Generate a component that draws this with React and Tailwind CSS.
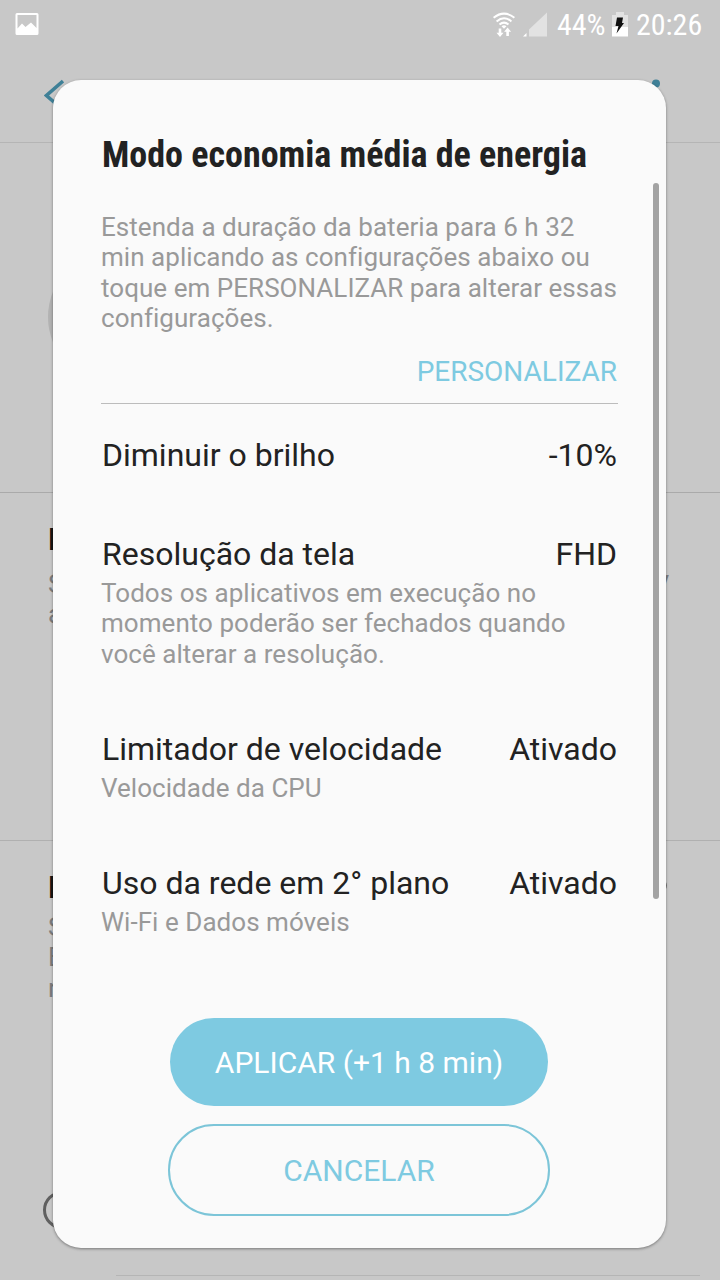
const settings = [
  { label: 'Diminuir o brilho', value: '-10%' },
  {
    label: 'Resolução da tela',
    value: 'FHD',
    lines: ['Todos os aplicativos em execução no', 'momento poderão ser fechados quando', 'você alterar a resolução.'],
  },
  { label: 'Limitador de velocidade', value: 'Ativado', lines: ['Velocidade da CPU'] },
  { label: 'Uso da rede em 2° plano', value: 'Ativado', lines: ['Wi-Fi e Dados móveis'] },
]

function StatusBar() {
  return (
    <div className="flex h-[50px] items-center justify-between pl-[15px] pr-[17px] text-white">
      <svg width="24" height="24" viewBox="0 0 24 24">
        <path
          fill="currentColor"
          fillRule="evenodd"
          d="M2 0h20q1.500 0 1.500 1.500v19q0 1.500-1.500 1.500H2Q.5 22 .5 20.500v-19Q.5 0 2 0zM2.500 2v13.500L7 10.500l3.500 3.500 5.500-4.500 5.500 5.500V2z"
        />
      </svg>

      <div className="flex items-center">
        <svg width="22" height="26" viewBox="0 0 22 26" fill="none" stroke="currentColor" strokeWidth="2">
          <path d="M.6 5.800Q11-2.600 21.400 5.800M3.600 9.400Q11 3 18.400 9.400M6.500 12.500Q11 8.800 15.500 12.500" />
          <path fill="currentColor" stroke="none" d="M8.500 14.200Q11 12.300 13.500 14.200L11 16.800zM5.700 16.500h2.600v4.200h2.200L7 25l-3.500-4.300h2.200zM13.300 24v-4.200h-2.200l3.500-4.300 3.500 4.300h-2.200V24z" />
        </svg>
        <svg className="ml-[8px]" width="25" height="26" viewBox="0 0 25 26">
          <path fill="#e2e2e2" d="M24 .5V24.500H6V17.500z" />
          <path fill="#fff" d="M0 24.500l3.500-3.500v3.500z" />
        </svg>
        <span className="ml-[9px] w-[49px] whitespace-nowrap font-['Roboto_Condensed','Roboto',sans-serif] text-[30px] leading-[50px] [font-stretch:75%]">
          44%
        </span>
        <svg className="ml-[6px]" width="16" height="26" viewBox="0 0 16 26">
          <path fill="#e2e2e2" d="M4 0h8v3h4v21H0V3h4z" />
          <path fill="#fff" d="M0 15h16v9.500H0z" />
          <path fill="#111" d="M5 5.500h6l-1 5.500h2L4.500 21.500 6.500 14H3.500z" />
        </svg>
        <span className="ml-[8px] w-[67px] whitespace-nowrap font-['Roboto_Condensed','Roboto',sans-serif] text-[30px] leading-[50px] [font-stretch:75%]">
          20:26
        </span>
      </div>
    </div>
  )
}

// Dimmed settings screen, only its edges show around the dialog
function SettingsScreen() {
  return (
    <div className="flex h-full flex-col bg-[#c8c8c8]">
      <header className="h-[143px] border-b border-[#b5b5b5]">
        <StatusBar />
        <div className="flex justify-between pl-[44px] pr-[60px] pt-[29px] text-[#3f8097]">
          <svg width="20" height="32" viewBox="0 0 20 32" fill="none" stroke="currentColor" strokeWidth="3.500">
            <path d="M19 2L2.500 16.500 19 31" />
          </svg>
          <svg width="8" height="32" viewBox="0 0 8 32" fill="currentColor">
            <circle cx="4" cy="4.500" r="4" />
            <circle cx="4" cy="16" r="4" />
            <circle cx="4" cy="27.500" r="4" />
          </svg>
        </div>
      </header>

      <section className="h-[350px] border-b border-[#aaa] pl-[48px] pt-[107px]">
        <div className="h-[134px] w-[134px] rounded-full bg-[#b2b2b2]" />
      </section>

      <section className="flex h-[348px] justify-between border-b border-[#b0b0b0] pl-[48px] pr-[51px] pt-[28px]">
        <div className="text-[26px] leading-[30.500px] text-[#7c7c7c]">
          <div className="mb-[10px] text-[32px] font-bold leading-[37.500px] text-[#161616]">E</div>
          <div>S</div>
          <div>a</div>
        </div>
        <div className="pt-[44px] text-[26px] leading-[30.500px] text-[#7c7c7c]">y</div>
      </section>

      <section className="flex h-[434px] flex-col justify-between">
        <div className="flex justify-between pl-[48px] pr-[53px] pt-[28px]">
          <div className="text-[26px] leading-[30.500px] text-[#7c7c7c]">
            <div className="mb-[5px] text-[32px] font-bold leading-[37.500px] text-[#161616]">E</div>
            <div>S</div>
            <div>E</div>
            <div>n</div>
          </div>
          <div className="mt-[10px] h-[13px] w-[13px] rounded-full bg-[#777]" />
        </div>
        <div className="mb-[46px] ml-[43px] h-[38px] w-[38px] rounded-full border-[3px] border-[#606060]" />
      </section>
      <div className="ml-[116px] mr-[20px] border-t border-[#b5b5b5]" />
    </div>
  )
}

function SettingRow({ label, value, lines = [] }) {
  return (
    <div>
      <div className="flex justify-between pl-px pr-px text-[32px] leading-[37.500px] text-[#222]">
        <span>{label}</span>
        <span>{value}</span>
      </div>
      {lines.length > 0 && (
        <div className="mt-[4px] text-[26px] leading-[30.500px] tracking-[0.04px] text-[#999]">
          {lines.map((line) => (
            <div key={line} className="whitespace-nowrap">{line}</div>
          ))}
        </div>
      )}
    </div>
  )
}

export default function App() {
  const [brightness, resolution, cpu, network] = settings

  return (
    <div className="relative h-[1280px] w-[720px] overflow-hidden font-['Roboto',sans-serif]">
      <SettingsScreen />

      {/* Dialog */}
      <div className="absolute left-[53px] top-[80px] flex h-[1168px] w-[613px] flex-col rounded-[28px] bg-[#fafafa] pl-[48px] pr-[48px] pt-[54px] shadow-[0_1px_3px_rgba(0,0,0,0.4)]">
        <h1 className="whitespace-nowrap pl-px font-['Roboto_Condensed','Roboto',sans-serif] text-[36px] font-bold leading-[42px] text-[#222] [font-stretch:75%]">
          Modo economia média de energia
        </h1>

        <div className="mt-[35.500px] whitespace-nowrap text-[26px] leading-[30.500px] tracking-[0.04px] text-[#999]">
          <div>Estenda a duração da bateria para 6 h 32</div>
          <div>min aplicando as configurações abaixo ou</div>
          <div>toque em PERSONALIZAR para alterar essas</div>
          <div>configurações.</div>
        </div>

        <button className="mr-px mt-[21.500px] h-[33px] self-end text-[28px] leading-[33px] text-[#7ecae1]">PERSONALIZAR</button>
        <div className="mt-[15px] border-t border-[#bcbcbc]" />

        <div className="mt-[33px] h-[99px]"><SettingRow {...brightness} /></div>
        <div className="h-[195px]"><SettingRow {...resolution} /></div>
        <div className="h-[134px]"><SettingRow {...cpu} /></div>
        <div className="h-[153px]"><SettingRow {...network} /></div>

        <div className="flex flex-col items-center gap-[18px] pr-px">
          <button className="h-[88px] w-[378px] rounded-full bg-[#7ecae1] text-[30px] text-white">APLICAR (+1 h 8 min)</button>
          <button className="h-[92px] w-[382px] rounded-full border-2 border-[#7cc5d8] text-[30px] text-[#7ecae1]">CANCELAR</button>
        </div>

        <div className="absolute right-[7px] top-[103px] h-[716px] w-[6px] rounded-full bg-[#a3a3a3]" />
      </div>
    </div>
  )
}
